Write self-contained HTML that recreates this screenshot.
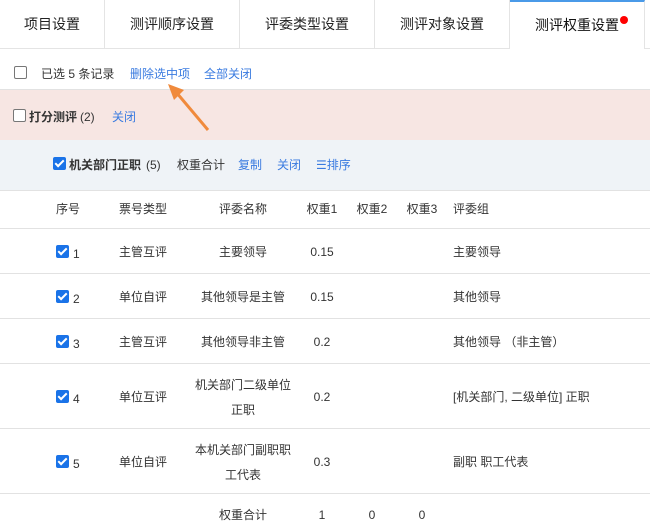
<!DOCTYPE html>
<html><head><meta charset="utf-8"><style>
*{margin:0;padding:0;box-sizing:border-box}
body{width:650px;height:522px;overflow:hidden;background:#fff;font-family:"Liberation Sans","Noto Sans CJK SC",sans-serif;font-size:12px;line-height:16px;color:#333;position:relative}
.a{position:absolute;white-space:nowrap}
.tab{position:absolute;top:0;height:49px;border-right:1px solid #e4e4e4;border-bottom:1px solid #e4e4e4;font-size:14px;color:#222;text-align:center;line-height:49px}
.link{color:#3a7be0}
.hl{position:absolute;left:0;width:650px;height:1px;background:#e2e2e2}
.cb{position:absolute;width:13px;height:13px;border:1px solid #777;border-radius:2px;background:#fff}
.ck{position:absolute;width:13px;height:13px;border-radius:2px;background:#1a73e8}
.ck:after{content:"";position:absolute;left:4px;top:1px;width:3px;height:7px;border:solid #fff;border-width:0 2px 2px 0;transform:rotate(45deg)}
.c{position:absolute;text-align:center;transform:translateX(-50%);white-space:nowrap}
</style></head><body>
<div class="tab" style="left:0;width:105px">项目设置</div>
<div class="tab" style="left:105px;width:135px">测评顺序设置</div>
<div class="tab" style="left:240px;width:135px">评委类型设置</div>
<div class="tab" style="left:375px;width:135px">测评对象设置</div>
<div class="tab" style="left:510px;width:135px;border-bottom:none;border-top:2px solid #4a9ae8;line-height:47px;color:#111">测评权重设置</div>
<div class="a" style="left:620px;top:16px;width:8px;height:8px;border-radius:50%;background:#f00"></div>
<div class="tab" style="left:645px;width:5px;border-right:none"></div>

<div class="cb" style="left:14px;top:66px"></div>
<div class="a" style="left:41px;top:66px">已选 5 条记录</div>
<div class="a link" style="left:130px;top:66px">删除选中项</div>
<div class="a link" style="left:204px;top:66px">全部关闭</div>
<div class="hl" style="top:89px"></div>

<div class="a" style="left:0;top:90px;width:650px;height:50px;background:#f7e6e3"></div>
<div class="cb" style="left:13px;top:109px"></div>
<div class="a" style="left:29px;top:109px;font-weight:bold;color:#333">打分测评</div>
<div class="a" style="left:80px;top:109px">(2)</div>
<div class="a link" style="left:112px;top:109px">关闭</div>

<svg class="a" style="left:160px;top:80px" width="60" height="60"><line x1="48" y1="50" x2="16" y2="12" stroke="#f08a3c" stroke-width="3"/><polygon points="8,4 24,10 14,20" fill="#f08a3c"/></svg>

<div class="a" style="left:0;top:140px;width:650px;height:50px;background:#eff3f7"></div>
<div class="ck" style="left:53px;top:157px"></div>
<div class="a" style="left:69px;top:157px;font-weight:bold;color:#333">机关部门正职</div>
<div class="a" style="left:146px;top:157px">(5)</div>
<div class="a" style="left:177px;top:157px">权重合计</div>
<div class="a link" style="left:238px;top:157px">复制</div>
<div class="a link" style="left:277px;top:157px">关闭</div>
<div class="a link" style="left:316px;top:157px">☰排序</div>
<div class="hl" style="top:190px"></div>

<div class="a" style="left:56px;top:201px">序号</div>
<div class="c" style="left:143px;top:201px">票号类型</div>
<div class="c" style="left:243px;top:201px">评委名称</div>
<div class="c" style="left:322px;top:201px">权重1</div>
<div class="c" style="left:372px;top:201px">权重2</div>
<div class="c" style="left:422px;top:201px">权重3</div>
<div class="a" style="left:453px;top:201px">评委组</div>
<div class="hl" style="top:228px"></div>

<div class="ck" style="left:56px;top:245px"></div><div class="a" style="left:73px;top:246px">1</div>
<div class="c" style="left:143px;top:244px">主管互评</div>
<div class="c" style="left:243px;top:244px">主要领导</div>
<div class="c" style="left:322px;top:244px">0.15</div>
<div class="a" style="left:453px;top:244px">主要领导</div>
<div class="hl" style="top:273px"></div>

<div class="ck" style="left:56px;top:290px"></div><div class="a" style="left:73px;top:291px">2</div>
<div class="c" style="left:143px;top:289px">单位自评</div>
<div class="c" style="left:243px;top:289px">其他领导是主管</div>
<div class="c" style="left:322px;top:289px">0.15</div>
<div class="a" style="left:453px;top:289px">其他领导</div>
<div class="hl" style="top:318px"></div>

<div class="ck" style="left:56px;top:335px"></div><div class="a" style="left:73px;top:336px">3</div>
<div class="c" style="left:143px;top:334px">主管互评</div>
<div class="c" style="left:243px;top:334px">其他领导非主管</div>
<div class="c" style="left:322px;top:334px">0.2</div>
<div class="a" style="left:453px;top:334px">其他领导 （非主管）</div>
<div class="hl" style="top:363px"></div>

<div class="ck" style="left:56px;top:390px"></div><div class="a" style="left:73px;top:391px">4</div>
<div class="c" style="left:143px;top:389px">单位互评</div>
<div class="c" style="left:243px;top:373px;line-height:25px">机关部门二级单位<br>正职</div>
<div class="c" style="left:322px;top:389px">0.2</div>
<div class="a" style="left:453px;top:389px">[机关部门, 二级单位] 正职</div>
<div class="hl" style="top:428px"></div>

<div class="ck" style="left:56px;top:455px"></div><div class="a" style="left:73px;top:456px">5</div>
<div class="c" style="left:143px;top:454px">单位自评</div>
<div class="c" style="left:243px;top:438px;line-height:25px">本机关部门副职职<br>工代表</div>
<div class="c" style="left:322px;top:454px">0.3</div>
<div class="a" style="left:453px;top:454px">副职 职工代表</div>
<div class="hl" style="top:493px"></div>

<div class="c" style="left:243px;top:507px">权重合计</div>
<div class="c" style="left:322px;top:507px">1</div>
<div class="c" style="left:372px;top:507px">0</div>
<div class="c" style="left:422px;top:507px">0</div>
</body></html>
